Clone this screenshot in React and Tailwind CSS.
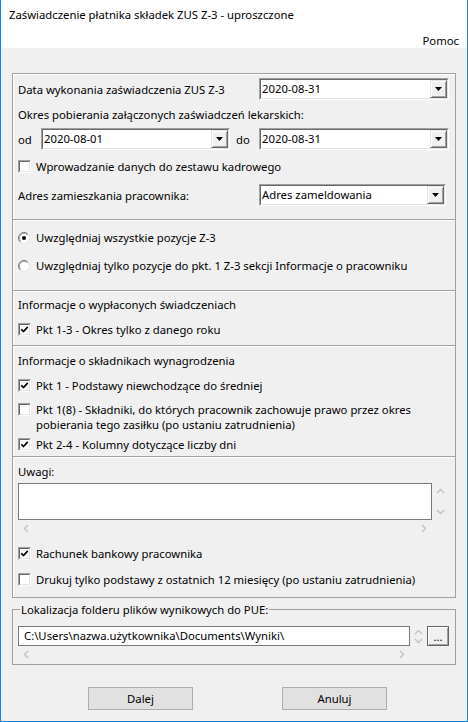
import React from "react";

const Tri = () => (
  <svg width="7" height="4" viewBox="0 0 7 4">
    <path d="M0 0H7L3.5 4Z" fill="#000" />
  </svg>
);

const Combo = ({ value, w }) => (
  <div className={`${w} h-[22px] shrink-0 flex border border-t-[#a0a0a0] border-l-[#a0a0a0] border-r-white border-b-white`}>
    <div className="flex-1 flex bg-white border border-t-[#696969] border-l-[#696969] border-r-[#e3e3e3] border-b-[#e3e3e3]">
      <span className="flex-1 pl-[1px] leading-[18px] whitespace-nowrap overflow-hidden">{value}</span>
      <span className="w-[17px] h-full flex items-center justify-center bg-[#f0f0f0] border border-t-[#e3e3e3] border-l-[#e3e3e3] border-r-[#696969] border-b-[#696969] shadow-[inset_1px_1px_0_#fff,inset_-1px_-1px_0_#a0a0a0]">
        <Tri />
      </span>
    </div>
  </div>
);

const Check = ({ checked }) => (
  <span className="w-[13px] h-[13px] mt-[1px] shrink-0 flex border border-t-[#a0a0a0] border-l-[#a0a0a0] border-r-white border-b-white">
    <span className="flex-1 flex items-center justify-center bg-white border border-t-[#696969] border-l-[#696969] border-r-[#e3e3e3] border-b-[#e3e3e3]">
      {checked && (
        <svg width="9" height="9" viewBox="0 0 9 9">
          <path d="M1.3 4.3L3.4 6.6L7.8 1.9" fill="none" stroke="#000" strokeWidth="1.7" />
        </svg>
      )}
    </span>
  </span>
);

const Radio = ({ checked }) => (
  <svg width="12" height="12" viewBox="0 0 12 12" className="shrink-0">
    <circle cx="6" cy="6" r="5.5" fill="#fff" stroke="#e3e3e3" />
    <path d="M2.1 9.9A5.5 5.5 0 0 1 9.9 2.1" fill="none" stroke="#7a7a7a" />
    <path d="M2.8 9.2A4.5 4.5 0 0 1 9.2 2.8" fill="none" stroke="#a0a0a0" />
    {checked && <circle cx="6" cy="6" r="2" fill="#000" />}
  </svg>
);

const CheckRow = ({ checked, children, className }) => (
  <div className={`flex items-start gap-[5px] leading-[15px] ${className}`}>
    <Check checked={checked} />
    <span>{children}</span>
  </div>
);

const RadioRow = ({ checked, children, className }) => (
  <div className={`flex items-center gap-[6px] h-[15px] leading-[15px] ${className}`}>
    <Radio checked={checked} />
    <span>{children}</span>
  </div>
);

const Chev = ({ d }) => (
  <svg width="9" height="9" viewBox="0 0 9 9">
    <path d={d} fill="none" stroke="#c2c2c2" strokeWidth="1.4" />
  </svg>
);
const UP = "M1 6L4.5 2.5L8 6";
const DOWN = "M1 3L4.5 6.5L8 3";
const LEFT = "M6 1L2.5 4.5L6 8";
const RIGHT = "M3 1L6.5 4.5L3 8";

export default function App() {
  return (
    <div className="w-[468px] h-[722px] flex flex-col bg-[#f0f0f0] border-x border-b border-[#1883d7] font-['Noto_Sans','Segoe_UI',sans-serif] text-[11.3px] text-black overflow-hidden">
      <div className="h-[31px] shrink-0 bg-white flex items-center pl-[8px] whitespace-nowrap">
        Zaświadczenie płatnika składek ZUS Z-3 - uproszczone
      </div>
      <div className="h-[17px] shrink-0 bg-white flex justify-end pr-[8px] pt-[2px] leading-[15px]">
        Pomoc
      </div>

      <div className="flex flex-col px-[11px] pt-[25px]">
        {/* main group */}
        <div className="flex flex-col border border-[#a0a0a0] shadow-[inset_1px_1px_0_#fff]">
          {/* section 1 */}
          <div className="flex flex-col pl-[5px] pr-[6px] pt-[4px] pb-[13px]">
            <div className="flex items-center">
              <span className="w-[241px] shrink-0 leading-[15px]">Data wykonania zaświadczenia ZUS Z-3</span>
              <Combo value="2020-08-31" w="w-[190px]" />
            </div>
            <div className="mt-[7px] h-[15px] leading-[15px]">Okres pobierania załączonych zaświadczeń lekarskich:</div>
            <div className="mt-[6px] flex items-center">
              <span className="w-[23px] shrink-0 leading-[15px]">od</span>
              <Combo value="2020-08-01" w="w-[189px]" />
              <span className="w-[29px] shrink-0 pl-[6px] leading-[15px]">do</span>
              <Combo value="2020-08-31" w="w-[190px]" />
            </div>
            <CheckRow checked={false} className="mt-[9px]">Wprowadzanie danych do zestawu kadrowego</CheckRow>
            <div className="mt-[10px] flex items-center">
              <span className="w-[241px] shrink-0 leading-[15px]">Adres zamieszkania pracownika:</span>
              <Combo value="Adres zameldowania" w="w-[187px]" />
            </div>
          </div>

          {/* section 2 */}
          <div className="flex flex-col border-t border-[#a0a0a0] shadow-[inset_0_1px_0_#fff] pl-[5px] pr-[6px] pt-[10px] pb-[17px]">
            <RadioRow checked>Uwzględniaj wszystkie pozycje Z-3</RadioRow>
            <RadioRow checked={false} className="mt-[13px]">
              Uwzględniaj tylko pozycje do pkt. 1 Z-3 sekcji Informacje o pracowniku
            </RadioRow>
          </div>

          {/* section 3 */}
          <div className="flex flex-col border-t border-[#a0a0a0] shadow-[inset_0_1px_0_#fff] pl-[5px] pr-[6px] pt-[6px] pb-[8px]">
            <div className="h-[15px] leading-[15px]">Informacje o wypłaconych świadczeniach</div>
            <CheckRow checked className="mt-[10px]">Pkt 1-3 - Okres tylko z danego roku</CheckRow>
          </div>

          {/* section 4 */}
          <div className="flex flex-col border-t border-[#a0a0a0] shadow-[inset_0_1px_0_#fff] pl-[5px] pr-[6px] pt-[7px] pb-[4px]">
            <div className="h-[15px] leading-[15px]">Informacje o składnikach wynagrodzenia</div>
            <CheckRow checked className="mt-[10px]">Pkt 1 - Podstawy niewchodzące do średniej</CheckRow>
            <CheckRow checked={false} className="mt-[9px]">
              Pkt 1(8) - Składniki, do których pracownik zachowuje prawo przez okres
              <br />
              pobierania tego zasiłku (po ustaniu zatrudnienia)
            </CheckRow>
            <CheckRow checked className="mt-[5px]">Pkt 2-4 - Kolumny dotyczące liczby dni</CheckRow>
          </div>

          {/* section 5 */}
          <div className="flex flex-col border-t border-[#a0a0a0] shadow-[inset_0_1px_0_#fff] pl-[5px] pr-[6px] pt-[7px] pb-[10px]">
            <div className="h-[15px] leading-[15px]">Uwagi:</div>
            <div className="mt-[4px] flex flex-col w-[431px]">
              <div className="flex h-[37px]">
                <div className="w-[414px] h-full bg-white border border-[#7a7a7a]" />
                <div className="w-[17px] flex flex-col justify-between">
                  <div className="h-[17px] flex items-center justify-center"><Chev d={UP} /></div>
                  <div className="h-[17px] flex items-center justify-center"><Chev d={DOWN} /></div>
                </div>
              </div>
              <div className="flex h-[17px] w-[414px] justify-between">
                <div className="w-[17px] flex items-center justify-center"><Chev d={LEFT} /></div>
                <div className="w-[17px] flex items-center justify-center"><Chev d={RIGHT} /></div>
              </div>
            </div>
            <CheckRow checked className="mt-[9px]">Rachunek bankowy pracownika</CheckRow>
            <CheckRow checked={false} className="mt-[11px]">
              Drukuj tylko podstawy z ostatnich 12 miesięcy (po ustaniu zatrudnienia)
            </CheckRow>
          </div>
        </div>

        {/* folder group */}
        <fieldset className="mt-[4px] min-w-0 border border-[#a0a0a0] pl-[5px] pr-[6px] pb-[1px]">
          <legend className="ml-[2px] px-[1px] leading-[15px]">Lokalizacja folderu plików wynikowych do PUE:</legend>
          <div className="mt-[9px] flex">
            <div className="flex flex-col">
              <div className="flex h-[20px]">
                <div className="w-[392px] h-full bg-white border border-[#7a7a7a] pl-[5px] leading-[18px] whitespace-nowrap overflow-hidden">
                  C:\Users\nazwa.użytkownika\Documents\Wyniki\
                </div>
                <div className="w-[17px] flex flex-col items-center justify-center -space-y-[1px]">
                  <Chev d={UP} />
                  <Chev d={DOWN} />
                </div>
              </div>
              <div className="flex h-[17px] w-[392px] justify-between">
                <div className="w-[17px] flex items-center justify-center"><Chev d={LEFT} /></div>
                <div className="w-[17px] flex items-center justify-center"><Chev d={RIGHT} /></div>
              </div>
            </div>
            <button className="w-[22px] h-[20px] bg-[#f0f0f0] border border-[#646464] shadow-[inset_1px_1px_0_#fff,inset_-1px_-1px_0_#a0a0a0] flex items-end justify-center leading-[14px] pb-[1px]">
              ...
            </button>
          </div>
        </fieldset>

        <div className="mt-[22px] flex gap-[89px] pl-[76px]">
          <button className="w-[105px] h-[23px] bg-[#e1e1e1] border border-[#adadad] leading-[15px]">Dalej</button>
          <button className="w-[105px] h-[23px] bg-[#e1e1e1] border border-[#adadad] leading-[15px]">Anuluj</button>
        </div>
      </div>
    </div>
  );
}
